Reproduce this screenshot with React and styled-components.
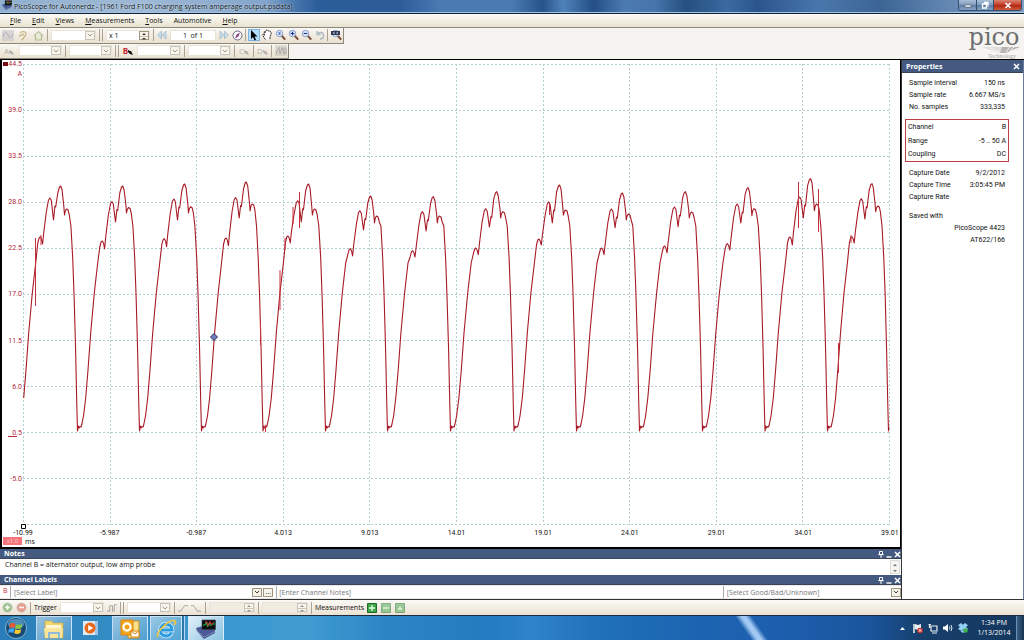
import React from "react";
import styled, { createGlobalStyle, css } from "styled-components";

const Global = createGlobalStyle`
  *, *::before, *::after { box-sizing: border-box; }
  html, body, #root { margin: 0; height: 100%; }
  body { font-family: "Open Sans", "Noto Sans", sans-serif; font-size: 7px; line-height: 10px; color: #111; overflow: hidden; }
  button, input, select { font: inherit; color: inherit; margin: 0; padding: 0; border: 0; background: none; border-radius: 0; }
  svg { display: block; }
`;

/* ---------- shell ---------- */

const Shell = styled.div`
  display: flex;
  flex-direction: column;
  height: 100vh;
  background: #f5f4f1;
`;

const TitleBar = styled.header`
  display: flex;
  align-items: flex-start;
  flex: none;
  height: 14px;
  padding-left: 2px;
  border-bottom: 1px solid #0d2238;
  box-shadow: inset 0 -1px 0 #a9c4de;
  background:
    linear-gradient(90deg, rgba(150, 180, 210, 0.95) 0, rgba(165, 190, 217, 0.95) 14%, rgba(140, 172, 208, 0.9) 26%, rgba(110, 150, 195, 0.4) 29%, transparent 31%),
    linear-gradient(90deg, #2b5e9a 30%, #2d5d98 39%, #4a7ab2 43%, #4a7ab2 50%, #27548a 53%, #4e82ba 55%, #244f84 58%, #4c7bb0 61%, #4674ab 64%, #25507f 67%, #3b6aa0 71%, #2b568c 74%, #4a77ab 80%, #3c6595 86%, #6589b3 93%, #7f9fc4 100%);
`;

const AppTitle = styled.h1`
  flex: 1;
  margin: 0 0 0 2px;
  font-size: 7px;
  font-weight: 400;
  line-height: 13px;
  color: #0a1420;
  text-shadow: 0 0 2px #fff;
`;

const WindowButtons = styled.div`
  display: flex;
  margin-right: 2px;
  border: 1px solid #34506f;
  border-top: 0;
  border-radius: 0 0 3px 3px;
  overflow: hidden;
`;

const WindowButton = styled.button`
  display: grid;
  place-items: center;
  width: ${(p) => (p.$close ? 28 : 17)}px;
  height: 10px;
  border-left: ${(p) => (p.$first ? 0 : "1px solid #34506f")};
  background: ${(p) =>
    p.$close
      ? "linear-gradient(#d98474, #c43a22 50%, #b02a14 55%, #cf5a3a)"
      : "linear-gradient(#a9bfd8, #7f9bbc 50%, #5f7fa6 55%, #86a3c4)"};
`;

const MenuBar = styled.nav`
  display: flex;
  align-items: center;
  flex: none;
  gap: 11px;
  height: 14px;
  padding-left: 10px;
  border-bottom: 1px solid #8b897f;
  background: linear-gradient(#fbfaf5, #e8e2cf);
`;

const MenuItem = styled.button`
  font-size: 7px;
  line-height: 12px;
  color: #111;
  u { text-decoration-thickness: 1px; text-underline-offset: 1px; }
`;

const ToolArea = styled.div`
  display: flex;
  justify-content: space-between;
  flex: none;
  height: 31px;
`;

const ToolStack = styled.div`
  display: flex;
  flex-direction: column;
  align-items: flex-start;
`;

const ToolStrip = styled.div`
  display: flex;
  align-items: center;
  gap: 3px;
  height: 16px;
  padding: 0 1px 0 2px;
  border-right: 1px solid #8d887c;
  border-bottom: 1px solid #8d887c;
  background: linear-gradient(#faf8f3, #e9e0d0);
`;

const ToolGroup = styled.div`
  display: flex;
  align-items: center;
  gap: 2px;
`;

const ToolButton = styled.button`
  display: grid;
  place-items: center;
  flex: none;
  width: ${(p) => p.$w || 12}px;
  height: 12px;
  opacity: ${(p) => (p.disabled ? 0.5 : 1)};
  ${(p) => p.$active && css`
    border: 1px solid #7cb4e0;
    background: #b5dbf8;
  `}
`;

const Sep = styled.span`
  flex: none;
  width: ${(p) => (p.$double ? 4 : 1)}px;
  height: 12px;
  border: solid #aaa394;
  border-width: 0 ${(p) => (p.$double ? 1 : 0)}px 0 1px;
`;

const Field = styled.span`
  display: flex;
  align-items: center;
  flex: none;
  width: ${(p) => p.$w}px;
  height: 11px;
  background: ${(p) => (p.$muted ? "#f1ece1" : "#fff")};
  border: 1px solid #e9e3d8;
`;

const FieldSelect = styled.select`
  appearance: none;
  flex: 1;
  min-width: 0;
  height: 9px;
  padding: 0 3px;
  line-height: 9px;
  color: #777;
  outline: 0;
`;

const FieldInput = styled.input`
  flex: 1;
  min-width: 0;
  width: 0;
  height: 9px;
  line-height: 9px;
  padding: 0 2px;
  text-align: ${(p) => (p.$center ? "center" : "left")};
  outline: 0;
`;

const DropMark = styled.span`
  display: grid;
  place-items: center;
  flex: none;
  width: 10px;
  height: 9px;
  border: 1px solid ${(p) => (p.$strong ? "#a0967f" : "#c9c4b8")};
  background: #f7f4ec;
  color: ${(p) => (p.$strong ? "#443c30" : "#9a9588")};
`;

const Logo = styled.div`
  display: flex;
  flex-direction: column;
  align-items: center;
  width: 58px;
  margin-right: 1px;
  padding-top: 1px;
  color: #6d6e70;
  font-family: "DejaVu Serif", serif;
  font-size: 24px;
  line-height: 17px;
`;

const LogoSub = styled.span`
  display: flex;
  flex-direction: column;
  align-items: center;
  align-self: flex-end;
  margin-right: 1px;
  font-family: "Liberation Serif", serif;
  font-size: 6px;
  line-height: 6px;
  color: #a5a29b;
`;

/* ---------- workspace ---------- */

const Workspace = styled.main`
  display: flex;
  flex: 1;
  min-height: 0;
  border-top: 1px solid #000;
  background: #fff;
`;

const LeftPane = styled.div`
  display: flex;
  flex-direction: column;
  flex: 1;
  min-width: 0;
  border-right: 1px solid #333;
`;

const ChartPanel = styled.section`
  display: flex;
  flex-direction: column;
  flex: 1;
  min-height: 0;
  border: solid #000;
  border-width: 0 1px 2px 2px;
  padding: 4px 10px 0 0;
`;

const PlotRow = styled.div`
  display: flex;
  flex: 1;
  min-height: 0;
`;

const YAxis = styled.div`
  display: flex;
  flex-direction: column;
  justify-content: space-between;
  flex: none;
  width: 21px;
  padding-right: 1px;
  color: #b3283a;
  font-family: Roboto, sans-serif;
  font-size: 7px;
  text-align: right;
`;

const YLabel = styled.span`
  height: 10px;
  margin: -5px 0;
  white-space: pre-line;
`;

const Plot = styled.svg`
  flex: 1;
  min-width: 0;
  width: 100%;
  height: 100%;
  overflow: visible;
`;

const XAxis = styled.div`
  display: flex;
  justify-content: space-between;
  flex: none;
  height: 11px;
  margin-left: 21px;
  padding-top: 3px;
  font-family: Roboto, sans-serif;
  font-size: 7px;
  line-height: 10px;
`;

const XLabel = styled.span`
  display: flex;
  justify-content: center;
  width: 0;
  white-space: nowrap;
`;

const AxisFoot = styled.div`
  display: flex;
  align-items: center;
  flex: none;
  gap: 3px;
  height: 11px;
  padding: 1px 0 1px 1px;
`;

const ScaleBadge = styled.span`
  width: 19px;
  height: 8px;
  margin-bottom: 2px;
  background: #f7747c;
  color: #ffd9d9;
  font-size: 6px;
  line-height: 8px;
  text-align: center;
`;

const DockHeader = styled.header`
  display: flex;
  align-items: center;
  justify-content: space-between;
  flex: none;
  height: ${(p) => (p.$tall ? 13 : 10)}px;
  padding: 0 ${(p) => (p.$tall ? 3 : 0)}px 0 4px;
  background: #445a80;
  box-shadow: inset 0 -1px 0 #3a4357;
  color: #fff;
`;

const DockTitle = styled.h2`
  margin: 0;
  font-size: 7px;
  font-weight: 700;
  line-height: 10px;
`;

const DockTools = styled.span`
  display: flex;
`;

const DockButton = styled.button`
  display: grid;
  place-items: center;
  width: 8px;
  height: 9px;
  color: #fff;
`;

const NotesRow = styled.div`
  display: flex;
  flex: none;
  height: 16px;
`;

const NotesInput = styled.textarea`
  flex: 1;
  margin: 0;
  padding: 0 5px;
  border: 0;
  outline: 0;
  resize: none;
  overflow: hidden;
  font: inherit;
  line-height: 11px;
  color: #111;
`;

const ScrollTrack = styled.span`
  display: flex;
  flex-direction: column;
  justify-content: space-between;
  align-items: center;
  width: 10px;
  margin: 1px;
  padding: 3px 0 1px;
  border: 1px solid #ddd;
  background: #f7f5f2;
  color: #777;
`;

const LabelRow = styled.div`
  display: grid;
  grid-template-columns: 10px 266fr 446fr 178fr;
  flex: none;
  height: 14px;
  padding: 1px 0;
  background: #e9e8e6;
`;

const LabelCell = styled.label`
  display: flex;
  align-items: center;
  gap: 1px;
  min-width: 0;
  height: 12px;
  border-left: 1px solid #aaa;
  background: #fff;
  color: #777;
`;

const ChannelMark = styled.span`
  padding-left: 3px;
  background: #fff;
  color: #c8303a;
  line-height: 9px;
`;

const MoreButton = styled.button`
  width: 10px;
  height: 9px;
  margin-right: 3px;
  border: 1px solid #a0967f;
  background: #f7f4ec;
  color: #222;
  font-size: 7px;
  line-height: 4px;
`;

/* ---------- properties ---------- */

const SidePane = styled.aside`
  flex: none;
  width: 122px;
  border-right: 1px solid #6c7c98;
  background: #fff;
`;

const PropTable = styled.table`
  width: ${(p) => (p.$boxed ? 104 : 100)}px;
  margin: ${(p) => p.$top}px 0 0 ${(p) => (p.$boxed ? 3 : 5)}px;
  border-collapse: collapse;
  border: ${(p) => (p.$boxed ? "1px solid #bb3f46" : "0")};
  font-family: Roboto, sans-serif;
  font-size: 7px;
  th, td { height: ${(p) => (p.$boxed ? 14 : 12)}px; padding: 0 2px; font-weight: 400; line-height: 10px; white-space: nowrap; }
  th { text-align: left; }
  td { text-align: right; }
`;

/* ---------- status and task bars ---------- */

const StatusBar = styled.footer`
  display: flex;
  align-items: center;
  flex: none;
  gap: 3px;
  height: 17px;
  padding-left: 2px;
  border-top: 1px solid #333;
  border-bottom: 1px solid #1a2a3a;
  background: linear-gradient(#fbfaf6, #eae1d2);
`;

const StatusText = styled.label`
  flex: none;
  font-size: 7px;
`;

const TaskBar = styled.footer`
  display: flex;
  align-items: stretch;
  flex: none;
  height: 24px;
  background:
    linear-gradient(55deg, transparent 72.2%, rgba(175, 212, 250, 0.9) 72.800%, rgba(175, 212, 250, 0.9) 73.2%, transparent 73.8%),
    linear-gradient(90deg, #2a7db8 0, #3b98cf 20%, #3f9bd0 30%, #2b85c5 38%, #247cc0 48%, #2f83cb 52%, #2072b9 58%, #1c66b2 66%, #1d5fae 76%, #1a559c 85%, #173f6c 90%, #15375d 100%);
`;

const TaskButton = styled.button`
  display: grid;
  place-items: center;
  flex: none;
  width: ${(p) => p.$w}px;
  margin-left: ${(p) => p.$gap || 0}px;
  border: ${(p) => (p.$open ? "1px solid rgba(225,240,255,.75)" : "0")};
  border-bottom: 0;
  background: ${(p) =>
    p.$active
      ? "linear-gradient(135deg, rgba(255,255,255,.85), rgba(190,222,240,.6))"
      : p.$open
      ? "linear-gradient(135deg, rgba(255,255,255,.5), rgba(150,205,235,.25))"
      : "none"};
  box-shadow: ${(p) => (p.$stacked ? "2px 0 0 #2b76ab, 3px 0 0 rgba(225,240,255,.75)" : "none")};
`;

const Tray = styled.div`
  display: flex;
  align-items: center;
  margin-left: auto;
`;

const TrayButton = styled.button`
  display: grid;
  place-items: center;
  width: 15px;
  height: 14px;
`;

const Clock = styled.time`
  width: 42px;
  margin-left: 3px;
  color: #fff;
  text-align: center;
  white-space: pre-line;
`;

const ShowDesktop = styled.button`
  align-self: stretch;
  width: 8px;
  margin-left: 1px;
  border: 1px solid #6f8fb0;
  border-width: 0 0 0 1px;
  background: linear-gradient(90deg, #3a5f88, #16314f);
`;

/* ---------- icons ---------- */

const Chevron = () => (
  <svg width="6" height="4" viewBox="0 0 6 4"><path d="M.8.8 3 3 5.2.8" fill="none" stroke="currentColor" /></svg>
);
const UpDown = () => (
  <svg width="8" height="9" viewBox="0 0 8 9"><path d="M2 3l2-2 2 2zM2 6l2 2 2-2z" fill="currentColor" /><path d="M0 4.500h8" stroke="#c9c4b8" /></svg>
);
const PinIcon = () => (
  <svg width="6" height="7" viewBox="0 0 6 7"><path d="M1.500.5h3v3h-3zM.3 3.600h5.400M3 4v3" fill="none" stroke="currentColor" /></svg>
);
const MinIcon = () => (
  <svg width="6" height="7" viewBox="0 0 6 7"><path d="M.5 6h5" stroke="currentColor" strokeWidth="1.400" /></svg>
);
const CloseIcon = () => (
  <svg width="7" height="7" viewBox="0 0 7 7"><path d="M1 1l5 5M6 1 1 6" stroke="currentColor" strokeWidth="1.500" /></svg>
);
const CloseIconWhite = () => (
  <svg width="8" height="7" viewBox="0 0 8 7"><path d="M1.500 1l5 5M6.500 1l-5 5" stroke="#fff" strokeWidth="1.700" /></svg>
);
const ScopeIcon = ({ size = 9 }) => (
  <svg width={size} height={size} viewBox="0 0 20 20">
    <path d="M0 9l7-2 12 4v3L8 20 1 12z" fill="#4b5a96" />
    <path d="M1 11.500 8 18l11-5.500" fill="none" stroke="#8592c4" strokeWidth=".8" />
    <path d="M6 1h13.500v9.500H6z" fill="#0b0f12" stroke="#3a4048" strokeWidth=".6" />
    <path d="M7 6h2l1.500-3 1 5 2-4 1 3 1.500-2h3" fill="none" stroke="#27c24a" />
    <path d="M9 3.500l1.500-1 1.500 4 2-4 1 3 3-2.500" fill="none" stroke="#e2323a" />
  </svg>
);
const Magnifier = ({ mark }) => (
  <svg width="11" height="12" viewBox="0 0 11 12">
    <path d="M6.500 6.500l3.700 4.200" stroke="#7b4c38" strokeWidth="2" />
    <circle cx="4.500" cy="4.500" r="3.200" fill="#d9e8fa" stroke="#8c9cc8" />
    {mark === "plus" && <path d="M2.700 4.500h3.600M4.500 2.700v3.600" stroke="#18308c" strokeWidth="1.100" />}
    {mark === "minus" && <path d="M2.700 4.500h3.600" stroke="#18308c" strokeWidth="1.100" />}
    {mark === "box" && <path d="M3.500 3h2v3h-2z" fill="#6a84c8" />}
    {mark === "full" && <path d="M0 2h9v4H0z" fill="#343c55" />}
    {mark === "full" && <path d="M2 4h1.500M5.500 4H7" stroke="#fff" />}
  </svg>
);
const WaveIcon = () => (
  <svg width="12" height="11" viewBox="0 0 12 11"><path d="M0 0h12v11H0z" fill="#c0bdc8" /><path d="M1 7c2-6 3-6 5-2s3 3 5-1" fill="none" stroke="#66708e" /></svg>
);
const ArbIcon = () => (
  <svg width="12" height="11" viewBox="0 0 12 11"><path d="M0 0h12v11H0z" fill="#c4c1bc" /><path d="M1 9l3-7 1 7 2-7 2 7V3h2v6" fill="none" stroke="#6c6c6c" /></svg>
);
const PulseIcon = () => (
  <svg width="11" height="11" viewBox="0 0 11 11"><path d="M2 3c3-3 8-1 5 3L4 10M1 6l5-2" fill="none" stroke="#b08a3a" strokeWidth="1.400" /></svg>
);
const HomeIcon = () => (
  <svg width="11" height="11" viewBox="0 0 11 11"><path d="M1 6l4.500-4.500L10 6M2.500 5.500V10h6V5.500" fill="#e2edc9" stroke="#8a9355" strokeWidth="1.200" /></svg>
);
const Rewind = ({ flip }) => (
  <svg width="10" height="10" viewBox="0 0 10 10">
    <path d={flip ? "M1 1l4 4-4 4zM5.500 1l4 4-4 4z" : "M9 1 5 5l4 4zM4.500 1l-4 4 4 4z"} fill="#a3cde8" stroke="#4f90bf" strokeWidth=".8" />
  </svg>
);
const Compass = () => (
  <svg width="11" height="11" viewBox="0 0 11 11"><circle cx="5.500" cy="5.500" r="4.500" fill="#fff" stroke="#6c6484" /><path d="M8 2.500 6.500 6.500 3 8.500l1.500-4z" fill="#8c4a86" /></svg>
);
const Cursor = () => (
  <svg width="8" height="11" viewBox="0 0 8 11"><path d="M1 0v9l2-2 1.500 3.500 1.500-.7L4.600 6.500H7.500z" fill="#000" /></svg>
);
const Hand = () => (
  <svg width="11" height="12" viewBox="0 0 11 12"><path d="M3.500 10.500C2 9 1 7 .8 5.500c.7-.6 1.200 0 1.700.8L2.200 2.800c.6-.7 1.200 0 1.300.7l.3-2c.6-.6 1.300-.3 1.300.4.5-1 1.500-.7 1.500.2.5-.6 1.500-.3 1.400.6.6-.3 1.300.2 1.200 1-.1 2-.6 3-1.200 4.500v2.300" fill="#fff" stroke="#222" strokeWidth=".9" strokeDasharray="2 .5" /></svg>
);
const Undo = () => (
  <svg width="10" height="10" viewBox="0 0 10 10"><path d="M2 1v3.500h3.500M2.200 4.300C4 1.500 8.500 2 8.500 5.500 8.500 8 6.500 9 5 9" fill="none" stroke="#6b86a8" strokeWidth="1.400" /></svg>
);
const ProbeTip = styled.span`
  display: flex;
  align-items: center;
  color: ${(p) => p.$color || "#777"};
  font-size: 8px;
  font-weight: ${(p) => (p.$strong ? 700 : 400)};
  line-height: 10px;
`;
const Probe = ({ letter, color, strong }) => (
  <ProbeTip $color={color} $strong={strong}>
    {letter}
    <svg width="5" height="9" viewBox="0 0 5 9"><path d="M0 4l2 1 1 0 2 4-3-1-2-2z" fill={strong ? "#111" : "#777"} /></svg>
  </ProbeTip>
);
const Ball = ({ color, minus }) => (
  <svg width="11" height="11" viewBox="0 0 11 11">
    <circle cx="5.500" cy="5.500" r="4.600" fill={color} stroke="#8a8a80" strokeWidth=".6" />
    <path d={minus ? "M3 5.500h5" : "M3 5.500h5M5.500 3v5"} stroke="#fff" strokeWidth="1.600" />
  </svg>
);
const EdgeIcon = ({ d }) => (
  <svg width="10" height="10" viewBox="0 0 11 10"><path d={d} fill="none" stroke="#555" /></svg>
);
const GreenBox = ({ d }) => (
  <svg width="10" height="10" viewBox="0 0 10 10">
    <path d="M.5.5h9v9h-9z" fill="#3fa648" stroke="#1d6b28" />
    <path d={d} stroke="#e6ffe6" strokeWidth="1.300" fill="none" />
  </svg>
);

/* ---------- waveform ---------- */

// One entry per cycle: start x, shoulder, shoulder dip, second peak, dip, main peak, dip, last crest
const CYCLES = [
  [15.5, 237, 244, 198, 220, 186, 215, 209],
  [77.5, 241, 249, 201.5, 222, 186, 213, 207.5],
  [139.5, 238.7, 246.7, 199, 220, 184, 213, 206.7],
  [201.5, 238, 245.7, 197.5, 218, 182, 211, 204],
  [263, 236, 243, 200.7, 222, 184, 215, 209],
  [325.5, 248.7, 256, 210.7, 230, 196, 223, 216],
  [387.5, 250.7, 257, 211.7, 231, 196.7, 223, 216],
  [450.5, 248, 254.7, 208.7, 227, 191.7, 218, 211.7],
  [514, 239, 245, 202, 223, 185, 215, 210],
  [576.5, 248, 254.7, 209, 227.7, 193, 220, 214],
  [639.5, 246, 253, 207, 226.7, 191.7, 218, 212],
  [702.5, 243.7, 250, 204, 223, 187.7, 215.7, 208.7],
  [765, 237, 245, 197, 218, 178.7, 210.7, 204],
  [827.5, 236.7, 243, 198.7, 219, 183.7, 211.7, 206],
  [888.5],
];
const LEFT = 23;
const TOP = 64;

function buildTrace() {
  const pts = [];
  for (let i = 0; i < CYCLES.length - 1; i++) {
    const [t, s, sd, b, bd, a, ad, l] = CYCLES[i];
    const k = (CYCLES[i + 1][0] - t) / 62;
    const add = (dx, y) => {
      const x = t + dx * k;
      if (x >= LEFT - 0.5) pts.push([x, y]);
    };
    add(0, 431); add(0.8, 426); add(1.6, 428); add(2.4, 426.5); add(3.6, 427); add(4.4, 424);
    add(6, 416); add(8.2, 398); add(10.5, 370); add(13.2, 333); add(16.8, 293); add(20.2, 263);
    add(22.3, s + 6); add(23.6, s + 1); add(24.8, s); add(26, s + 2); add(27.1, sd);
    add(28.2, s - 4); add(30.8, b + 14); add(33, b + 2); add(34.4, b); add(35.8, b + 2.5); add(38, bd);
    add(39.4, b + 8); add(40.2, b + 9); add(42.3, a + 7); add(44, a + 1); add(45.2, a); add(46.6, a + 4);
    add(48.4, ad - 8); add(49, ad); add(49.8, l + 2); add(51, l); add(52.6, l + 1); add(53.8, l + 6);
    add(55.4, 226); add(57.2, 258); add(58.6, 296); add(60.1, 350); add(61.3, 405);
  }
  pts.push([888.5, 431], [889, 427]);
  return pts.map(([x, y], i) => `${i ? "L" : "M"}${(x - LEFT).toFixed(1)} ${(y - TOP).toFixed(1)}`).join("");
}

const TRACE = buildTrace();
const SPIKES = [
  [35.5, 238, 306], [299.5, 192, 228], [280, 270, 310], [293, 207, 224], [285, 238, 250], [549.5, 202, 215],
  [798.5, 182, 228], [818.5, 189, 232], [838.5, 343, 373], [851, 235, 243], [265.5, 425, 432],
  [260.5, 320, 345], [41, 235, 245],
];
const Y_LABELS = ["44.5\nA", "39.0", "33.5", "28.0", "22.5", "17.0", "11.5", "6.0", "0.5", "-5.0", ""];
const X_LABELS = ["-10.99", "-5.987", "-0.987", "4.013", "9.013", "14.01", "19.01", "24.01", "29.01", "34.01", "39.01"];
const STEPS = Array.from({ length: 11 }, (_, i) => i);

function Chart() {
  return (
    <ChartPanel aria-label="Scope view">
      <PlotRow>
        <YAxis>{Y_LABELS.map((t, i) => <YLabel key={i}>{t}</YLabel>)}</YAxis>
        <Plot viewBox="0 0 867 461" preserveAspectRatio="none">
          <g stroke="#b2cfcf" strokeDasharray="2 2" shapeRendering="crispEdges">
            {STEPS.map((i) => <path key={"h" + i} d={`M0 ${i * 46 + 0.5}H867`} />)}
            {STEPS.map((i) => <path key={"v" + i} d={`M${Math.round(i * 86.6) + 0.5} 0V461`} />)}
          </g>
          <path d={TRACE} fill="none" stroke="#a81a26" strokeWidth="1.1" strokeLinejoin="round" />
          <g stroke="#c4303a">
            {SPIKES.map(([x, y1, y2]) => <path key={x} d={`M${x - LEFT} ${y1 - TOP}V${y2 - TOP}`} />)}
          </g>
          <path d="M191 269.5 194.5 273 191 276.5 187.5 273z" fill="#6f7cc0" stroke="#2f2f55" />
          <path d="M-1.500 460.500h4v4h-4z" fill="#fff" stroke="#000" />
          <path d="M-15 372.500h9" stroke="#b3283a" />
          <path d="M-20 -2h5v4h-5z" fill="#7a0c16" />
        </Plot>
      </PlotRow>
      <XAxis>{X_LABELS.map((t) => <XLabel key={t}>{t}</XLabel>)}</XAxis>
      <AxisFoot><ScaleBadge>x1.0</ScaleBadge>ms</AxisFoot>
    </ChartPanel>
  );
}

/* ---------- composed parts ---------- */

function Combo({ w, label, muted }) {
  return (
    <Field $w={w} $muted={muted}>
      <FieldSelect aria-label={label}><option></option></FieldSelect>
      <DropMark><Chevron /></DropMark>
    </Field>
  );
}

function Spin({ w, label, value = "", muted }) {
  return (
    <Field $w={w} $muted={muted}>
      <FieldInput aria-label={label} defaultValue={value} />
      <DropMark $strong={!muted}><UpDown /></DropMark>
    </Field>
  );
}

function Dock({ title }) {
  return (
    <DockHeader>
      <DockTitle>{title}</DockTitle>
      <DockTools>
        <DockButton aria-label={`Pin ${title}`}><PinIcon /></DockButton>
        <DockButton aria-label={`Minimize ${title}`}><MinIcon /></DockButton>
        <DockButton aria-label={`Close ${title}`}><CloseIcon /></DockButton>
      </DockTools>
    </DockHeader>
  );
}

function Props({ rows, top, boxed }) {
  return (
    <PropTable $top={top} $boxed={boxed}>
      <tbody>
        {rows.map(([k, v], i) => <tr key={i}><th scope="row">{k}</th><td>{v}</td></tr>)}
      </tbody>
    </PropTable>
  );
}

const MENUS = [["F", "ile"], ["E", "dit"], ["V", "iews"], ["M", "easurements"], ["T", "ools"], ["", "Automotive"], ["H", "elp"]];

export default function App() {
  return (
    <Shell>
      <Global />
      <TitleBar>
        <ScopeIcon size={10} />
        <AppTitle>PicoScope for Autonerdz - [1961 Ford F100 charging system amperage output.psdata]</AppTitle>
        <WindowButtons>
          <WindowButton $first aria-label="Minimize"><svg width="8" height="6"><path d="M1 3h6v2H1z" fill="#fff" stroke="#445" strokeWidth=".5" /></svg></WindowButton>
          <WindowButton aria-label="Restore"><svg width="8" height="8"><path d="M1.5 3h4v4h-4zM3 1.5h4v4" fill="none" stroke="#fff" strokeWidth="1.3" /></svg></WindowButton>
          <WindowButton $close aria-label="Close"><CloseIconWhite /></WindowButton>
        </WindowButtons>
      </TitleBar>

      <MenuBar>
        {MENUS.map(([u, rest]) => <MenuItem key={rest}>{u && <u>{u}</u>}{rest}</MenuItem>)}
      </MenuBar>

      <ToolArea>
        <ToolStack>
          <ToolStrip>
            <ToolButton disabled aria-label="Scope mode"><WaveIcon /></ToolButton>
            <ToolButton disabled aria-label="Auto setup"><PulseIcon /></ToolButton>
            <ToolButton disabled aria-label="Home"><HomeIcon /></ToolButton>
            <Sep />
            <Combo w={45} label="Timebase" />
            <Sep $double />
            <Spin w={44} label="Zoom factor" value="x 1" />
            <ToolGroup>
              <Sep />
              <ToolButton disabled aria-label="Previous"><Rewind /></ToolButton>
              <Field $w={46}><FieldInput $center aria-label="Buffer" defaultValue="1  of 1" /></Field>
              <ToolButton disabled aria-label="Next"><Rewind flip /></ToolButton>
              <ToolButton $w={11} aria-label="Buffer navigator"><Compass /></ToolButton>
              <Sep />
              <ToolButton $active aria-label="Select"><Cursor /></ToolButton>
              <ToolButton $w={11} aria-label="Hand"><Hand /></ToolButton>
              <ToolButton $w={11} aria-label="Marquee zoom"><Magnifier mark="box" /></ToolButton>
              <ToolButton $w={11} aria-label="Zoom in"><Magnifier mark="plus" /></ToolButton>
              <ToolButton $w={11} aria-label="Zoom out"><Magnifier mark="minus" /></ToolButton>
              <ToolButton $w={11} disabled aria-label="Undo zoom"><Undo /></ToolButton>
              <Sep />
              <ToolButton aria-label="Full view"><Magnifier mark="full" /></ToolButton>
            </ToolGroup>
          </ToolStrip>
          <ToolStrip>
            <ToolButton disabled $w={14} aria-label="Channel A"><Probe letter="A" /></ToolButton>
            <Combo w={43} label="Channel A range" />
            <Sep />
            <Combo w={43} label="Channel A coupling" />
            <Sep $double />
            <ToolButton aria-label="Channel B"><Probe letter="B" color="#c42832" strong /></ToolButton>
            <Combo w={44} label="Channel B range" />
            <Sep />
            <Combo w={43} label="Channel B coupling" />
            <Sep />
            <ToolButton disabled aria-label="Channel C"><Probe letter="C" /></ToolButton>
            <Sep />
            <ToolButton disabled $w={11} aria-label="Channel D"><Probe letter="D" /></ToolButton>
            <Sep />
            <ToolButton disabled aria-label="Signal generator"><ArbIcon /></ToolButton>
          </ToolStrip>
        </ToolStack>
        <Logo>
          pico
          <LogoSub>
            <svg width="40" height="7" viewBox="0 0 40 7"><path d="M0 1h38L18 7z" fill="#dedcd9" /><path d="M20 1h18L24 7h-6z" fill="#b7b5b2" /><path d="M8 2l10 4M24 6l4-5M28 5l4-4" stroke="#f5f4f1" /></svg>
            Technology
          </LogoSub>
        </Logo>
      </ToolArea>

      <Workspace>
        <LeftPane>
          <Chart />
          <Dock title="Notes" />
          <NotesRow>
            <NotesInput aria-label="Notes" defaultValue="Channel B = alternator output, low amp probe" />
            <ScrollTrack>
              <svg width="4" height="2"><path d="M0 2l2-2 2 2z" fill="currentColor" /></svg>
              <svg width="4" height="2"><path d="M0 0l2 2 2-2z" fill="currentColor" /></svg>
            </ScrollTrack>
          </NotesRow>
          <Dock title="Channel Labels" />
          <LabelRow>
            <ChannelMark>B</ChannelMark>
            <LabelCell>
              <FieldSelect aria-label="Channel label"><option>[Select Label]</option></FieldSelect>
              <DropMark $strong><Chevron /></DropMark>
              <MoreButton aria-label="More labels">...</MoreButton>
            </LabelCell>
            <LabelCell><FieldInput aria-label="Channel notes" defaultValue="[Enter Channel Notes]" /></LabelCell>
            <LabelCell>
              <FieldSelect aria-label="Condition"><option>[Select Good/Bad/Unknown]</option></FieldSelect>
              <DropMark $strong><Chevron /></DropMark>
            </LabelCell>
          </LabelRow>
        </LeftPane>
        <SidePane>
          <DockHeader $tall>
            <DockTitle>Properties</DockTitle>
            <DockButton aria-label="Close properties"><CloseIcon /></DockButton>
          </DockHeader>
          <Props top={4} rows={[["Sample interval", "150 ns"], ["Sample rate", "6.667 MS/s"], ["No. samples", "333,335"]]} />
          <Props boxed top={6} rows={[["Channel", "B"], ["Range", "-5 .. 50 A"], ["Coupling", "DC"]]} />
          <Props top={5} rows={[["Capture Date", "9/2/2012"], ["Capture Time", "3:05:45 PM"], ["Capture Rate", ""]]} />
          <Props top={7} rows={[["Saved with", ""], ["", "PicoScope 4423"], ["", "AT622/166"]]} />
        </SidePane>
      </Workspace>

      <StatusBar>
        <ToolButton disabled $w={11} aria-label="Start"><Ball color="#3f9b3c" /></ToolButton>
        <ToolButton disabled $w={11} aria-label="Stop"><Ball color="#e0503c" minus /></ToolButton>
        <Sep />
        <StatusText htmlFor="trigger">Trigger</StatusText>
        <Field $w={44}><FieldSelect id="trigger"><option></option></FieldSelect><DropMark><Chevron /></DropMark></Field>
        <ToolButton disabled $w={10} aria-label="Advanced trigger"><EdgeIcon d="M0 8.5h3v-6h3v6h2v-7h3" /></ToolButton>
        <Sep $double />
        <Combo w={44} label="Trigger source" />
        <Sep />
        <ToolButton disabled $w={10} aria-label="Rising edge"><EdgeIcon d="M0 8.5h3l4-6h4" /></ToolButton>
        <ToolButton disabled $w={11} aria-label="Falling edge"><EdgeIcon d="M0 2.5h3l4 6h4" /></ToolButton>
        <Sep />
        <Spin w={46} muted label="Threshold" />
        <Sep />
        <Spin w={46} muted label="Pre-trigger" />
        <Sep />
        <StatusText as="span">Measurements</StatusText>
        <ToolButton $w={11} aria-label="Add measurement"><GreenBox d="M2 5h6M5 2v6" /></ToolButton>
        <ToolButton disabled $w={11} aria-label="Edit measurement"><GreenBox d="M2 5h6" /></ToolButton>
        <ToolButton disabled $w={11} aria-label="Delete measurement"><GreenBox d="M3 6h4M5 3.500v2.500" /></ToolButton>
      </StatusBar>

      <TaskBar>
        <TaskButton $w={32} aria-label="Start menu">
          <svg width="22" height="22" viewBox="0 0 22 22">
            <circle cx="11" cy="11" r="10.5" fill="#174a74" stroke="#7fb4d8" />
            <ellipse cx="11" cy="7" rx="8" ry="5" fill="#4f8dba" />
            <path d="M5 7c2-1.500 4-1 5.500 0l-1 4C8 10 6 10 4 11z" fill="#e8592b" />
            <path d="M11.300 7.300c2 1 4 1 6-.3l-1 4c-2 1.200-4 1.200-6 .2z" fill="#8cc63f" />
            <path d="M3.800 12c2-1 4-1 5.500 0l-1 4c-1.500-1-3.500-1-5 0z" fill="#3fa9f5" />
            <path d="M10.200 12.300c2 1 4 1 6-.2l-1 4c-2 1.200-4 1.200-6 .2z" fill="#fcc92c" />
          </svg>
        </TaskButton>
        <TaskButton $w={36} $gap={4} $open aria-label="Explorer">
          <svg width="22" height="20" viewBox="0 0 22 20">
            <path d="M2 2h7l1 2h10v15H2z" fill="#f0d46e" stroke="#c9a33c" strokeWidth=".6" />
            <path d="M3 6h15v3H3z" fill="#fdf6d0" /><path d="M1 9h19l-1 10H2z" fill="#f8e59a" />
            <path d="M6 19v-5h10v5" fill="none" stroke="#8fb9d8" strokeWidth="2" />
          </svg>
        </TaskButton>
        <TaskButton $w={28} $gap={5} aria-label="Media player">
          <svg width="16" height="16" viewBox="0 0 16 16">
            <path d="M5 1h10v14H5z" fill="#9cc4e4" /><path d="M0 1h12v14H0z" fill="#dfeaf4" />
            <circle cx="7" cy="8" r="5.500" fill="#e8681c" /><path d="M5.200 5v6l5-3z" fill="#fff" />
          </svg>
        </TaskButton>
        <TaskButton $w={36} $gap={7} $open aria-label="Outlook">
          <svg width="20" height="20" viewBox="0 0 20 20">
            <path d="M8 2h11v17H8z" fill="#fbe08a" stroke="#c98a1a" /><path d="M1 1h12v15H1z" fill="#f2a51c" stroke="#d88510" />
            <circle cx="7" cy="8" r="3.600" fill="none" stroke="#fff" strokeWidth="2.200" />
            <path d="M11 12h8v6h-8z" fill="#fff" stroke="#d88510" /><path d="M11 12l4 3 4-3" fill="none" stroke="#d88510" />
          </svg>
        </TaskButton>
        <TaskButton $w={32} $gap={2} $open $stacked aria-label="Internet Explorer">
          <svg width="21" height="20" viewBox="0 0 21 20">
            <path d="M5 11h11c0-7-10-8-11.500-1C3.500 18 13 19 15.500 13.500" fill="none" stroke="#d8f0ff" strokeWidth="4.500" />
            <path d="M5 11h11c0-7-10-8-11.500-1C3.500 18 13 19 15.500 13.500" fill="none" stroke="#2b9be0" strokeWidth="3" />
            <path d="M2 18C-1 14 14-1 19 2c1 1 0 3-1 4" fill="none" stroke="#f2c63a" strokeWidth="1.600" />
          </svg>
        </TaskButton>
        <TaskButton $w={36} $gap={6} $open $active aria-label="PicoScope"><ScopeIcon size={20} /></TaskButton>

        <Tray>
          <TrayButton aria-label="Show hidden icons"><svg width="5" height="3"><path d="M0 3l2.500-3L5 3z" fill="#fff" /></svg></TrayButton>
          <TrayButton aria-label="Action center">
            <svg width="10" height="11" viewBox="0 0 10 11"><path d="M1 1v9" stroke="#fff" strokeWidth="1.400" /><path d="M2 1l3 1 3-1v5L5 7 2 6z" fill="#e9eef4" /><circle cx="7" cy="7.500" r="2.800" fill="#d2302a" /><path d="M5.800 6.300l2.400 2.400m0-2.400L5.800 8.700" stroke="#fff" /></svg>
          </TrayButton>
          <TrayButton aria-label="Network">
            <svg width="10" height="11" viewBox="0 0 10 11"><path d="M3 3h6v5H3zM4 10h5M1.500 1v4M.5 1.500h2.500" fill="none" stroke="#e9eef4" strokeWidth="1.200" /></svg>
          </TrayButton>
          <TrayButton aria-label="Volume">
            <svg width="10" height="10" viewBox="0 0 10 10"><path d="M0 3.500h2L5 1v8L2 6.500H0z" fill="#fff" /><path d="M6.500 3.500q1 1.500 0 3M8 2q2 3 0 6" fill="none" stroke="#dfe8f0" /></svg>
          </TrayButton>
          <TrayButton aria-label="Dropbox">
            <svg width="10" height="10" viewBox="0 0 10 10"><path d="M3 0l2 1.700L7 0l3 2.200L8 4l2 2-3 1.800L5 6.500 3 7.800 0 6l2-2L0 2.200zM2.500 8.200 5 7l2.500 1.200L5 10z" fill="#8fd0f4" /><circle cx="7.500" cy="7.500" r="2.300" fill="#3fae49" /></svg>
          </TrayButton>
          <Clock>{"1:34 PM\n1/13/2014"}</Clock>
          <ShowDesktop aria-label="Show desktop" />
        </Tray>
      </TaskBar>
    </Shell>
  );
}
